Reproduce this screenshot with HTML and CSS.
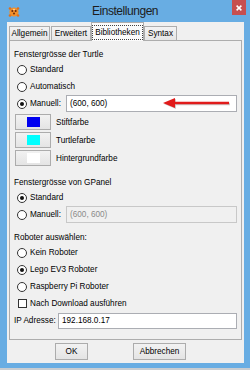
FILE: index.html
```html
<!DOCTYPE html>
<html lang="de">
<head>
  <meta charset="UTF-8" />
  <title>Einstellungen</title>
  <link rel="stylesheet" href="styles.css">
</head>
<body>

  <div class="window">
    <div class="titlebar">
      <div class="app-icon">
        <svg width="12" height="12" viewBox="0 0 12 12">
          <circle cx="6" cy="6" r="4.6" fill="#f2902a" />
          <circle cx="2" cy="2.5" r="1.3" fill="#e0701a" />
          <circle cx="10" cy="2.5" r="1.3" fill="#e0701a" />
          <circle cx="2" cy="9.5" r="1.3" fill="#e0701a" />
          <circle cx="10" cy="9.5" r="1.3" fill="#e0701a" />
          <circle cx="4.3" cy="5" r="1" fill="#6b2a0a" />
          <circle cx="7.7" cy="5" r="1" fill="#6b2a0a" />
          <circle cx="6" cy="7.6" r="1" fill="#6b2a0a" />
          <circle cx="6" cy="3.5" r="0.7" fill="#fff3d8" />
        </svg>
      </div>
      <div class="title">Einstellungen</div>
      <div class="close">
        <svg width="6" height="6" viewBox="0 0 6 6">
          <path d="M0.6 0.6 L5.4 5.4 M5.4 0.6 L0.6 5.4" stroke="#fff" stroke-width="1.5" />
        </svg>
      </div>
    </div>

    <div class="client">
      <div class="tabs">
        <div class="tab tab-allgemein">Allgemein</div>
        <div class="tab tab-erweitert">Erweitert</div>
        <div class="tab tab-active"><span class="focus">Bibliotheken</span></div>
        <div class="tab tab-syntax">Syntax</div>
      </div>

      <div class="panel">
        <div class="heading">Fenstergrösse der Turtle</div>
        <div class="row"><span class="radio"></span>Standard</div>
        <div class="row"><span class="radio"></span>Automatisch</div>
        <div class="row">
          <span class="radio checked"></span>Manuell:
          <div class="field size-field">
            (600, 600)
            <svg class="arrow" width="70" height="14" viewBox="0 0 70 14">
              <path d="M13 8 L67 8" stroke="#9a9a9a" stroke-opacity="0.5" stroke-width="2.4" />
              <path d="M1 8 L13 3 L13 13 Z" fill="#9a9a9a" fill-opacity="0.5" />
              <path d="M12 7 L66 7" stroke="#e11b1b" stroke-width="2.4" />
              <path d="M0 7 L12 2 L12 12 Z" fill="#e11b1b" />
            </svg>
          </div>
        </div>

        <div class="color-row first"><span class="color-btn"><span class="swatch" style="background:#0000f0"></span></span>Stiftfarbe</div>
        <div class="color-row"><span class="color-btn"><span class="swatch" style="background:#00ffff"></span></span>Turtlefarbe</div>
        <div class="color-row"><span class="color-btn"><span class="swatch" style="background:#ffffff"></span></span>Hintergrundfarbe</div>

        <div class="heading gpanel">Fenstergrösse von GPanel</div>
        <div class="row"><span class="radio checked"></span>Standard</div>
        <div class="row">
          <span class="radio"></span>Manuell:
          <div class="field size-field disabled">(600, 600)</div>
        </div>

        <div class="heading roboter">Roboter auswählen:</div>
        <div class="row"><span class="radio"></span>Kein Roboter</div>
        <div class="row"><span class="radio checked"></span>Lego EV3 Roboter</div>
        <div class="row"><span class="radio"></span>Raspberry Pi Roboter</div>
        <div class="row"><span class="checkbox"></span>Nach Download ausführen</div>
        <div class="row ip-row">
          IP Adresse:
          <div class="field ip-field">192.168.0.17</div>
        </div>
      </div>

      <div class="buttons">
        <div class="btn btn-ok">OK</div>
        <div class="btn btn-cancel">Abbrechen</div>
      </div>
    </div>
  </div>

</body>
</html>
```

FILE: styles.css
```css
body {
  margin: 0;
  background: #c9cdd1;
  font-family: "Liberation Sans", Arial, sans-serif;
  font-size: 8.2px;
  color: #000;
}

.window {
  width: 250px;
  height: 368px;
  background: #68ade3;
  display: flex;
  flex-direction: column;
}

/* title bar */
.titlebar {
  height: 22px;
  display: grid;
  grid-template-columns: 1fr auto 1fr;
  align-items: center;
}

.app-icon {
  padding-left: 8px;
  height: 12px;
  margin-top: 1px;
}

.app-icon svg { display: block; }

.title {
  font-size: 12px;
  letter-spacing: -0.45px;
  color: #1c1c1c;
}

.close {
  justify-self: end;
  align-self: start;
  margin-right: 4px;
  width: 14px;
  height: 15px;
  background: #c74f4f;
  display: flex;
  align-items: center;
  justify-content: center;
}

.close svg { display: block; }

/* client area */
.client {
  margin: 0 6px 0 7px;
  height: 341px;
  background: #f0f0f0;
  padding: 0 2px;
  display: flex;
  flex-direction: column;
}

.tabs {
  height: 18px;
  display: flex;
  align-items: flex-end;
  position: relative;
  z-index: 1;
}

.tab {
  height: 13px;
  border: 1px solid #adadad;
  border-bottom: none;
  background: linear-gradient(#f3f3f3, #e6e6e6);
  display: flex;
  align-items: center;
  justify-content: center;
  box-sizing: border-box;
  height: 14px;
}

.tab-allgemein { width: 41px; margin-right: 1px; }
.tab-erweitert { width: 40px; }
.tab-syntax { width: 33px; }

.tab-active {
  width: 53px;
  height: 18px;
  background: #fbfbfb;
  margin-bottom: -1px;
  height: 19px;
}

.focus {
  outline: 1px dotted #444;
  outline-offset: 1px;
  padding: 0 1px;
  line-height: 11px;
}

.panel {
  height: 300px;
  box-sizing: border-box;
  border: 1px solid #adadad;
  background: #f0f0f0;
  padding: 6px 4px 0 4px;
  display: flex;
  flex-direction: column;
}

.heading {
  height: 14px;
  display: flex;
  align-items: center;
}

.heading.gpanel { margin-top: 9px; }
.heading.roboter { margin-top: 7px; }

.row {
  height: 17px;
  display: flex;
  align-items: center;
}

.radio {
  width: 10px;
  height: 10px;
  box-sizing: border-box;
  border: 1px solid #333;
  border-radius: 50%;
  background: #fff;
  margin: 0 3px 0 3px;
  display: flex;
  align-items: center;
  justify-content: center;
}

.radio.checked::after {
  content: "";
  width: 4px;
  height: 4px;
  border-radius: 50%;
  background: #111;
}

.checkbox {
  width: 9px;
  height: 9px;
  box-sizing: border-box;
  border: 1px solid #333;
  background: #fff;
  margin: 0 3px 0 4px;
}

.field {
  height: 17px;
  box-sizing: border-box;
  border: 1px solid #abadb3;
  background: #fff;
  display: flex;
  align-items: center;
  padding-left: 3px;
  margin-left: auto;
}

.size-field {
  width: 171px;
  position: relative;
}

.size-field.disabled {
  background: #f0f0f0;
  border-color: #c8c8c8;
  color: #8a8a8a;
}

.ip-field {
  width: 179px;
  height: 16px;
}

.arrow {
  position: absolute;
  left: 96px;
  top: 0px;
}

.color-row {
  height: 16px;
  margin-top: 2px;
  display: flex;
  align-items: center;
}

.color-row.first { margin-top: 2px; }

.color-btn {
  width: 36px;
  height: 16px;
  box-sizing: border-box;
  border: 1px solid #acacac;
  background: linear-gradient(#f2f2f2, #e4e4e4);
  margin: 0 5px 0 1px;
  display: flex;
  align-items: center;
  justify-content: center;
}

.swatch {
  width: 13px;
  height: 10px;
}

/* dialog buttons */
.buttons {
  display: flex;
  padding: 3px 0 0 46px;
  gap: 45px;
}

.btn {
  height: 17px;
  box-sizing: border-box;
  border: 1px solid #acacac;
  background: linear-gradient(#f2f2f2, #e4e4e4);
  display: flex;
  align-items: center;
  justify-content: center;
}

.btn-ok { width: 33px; }
.btn-cancel { width: 53px; }
```
